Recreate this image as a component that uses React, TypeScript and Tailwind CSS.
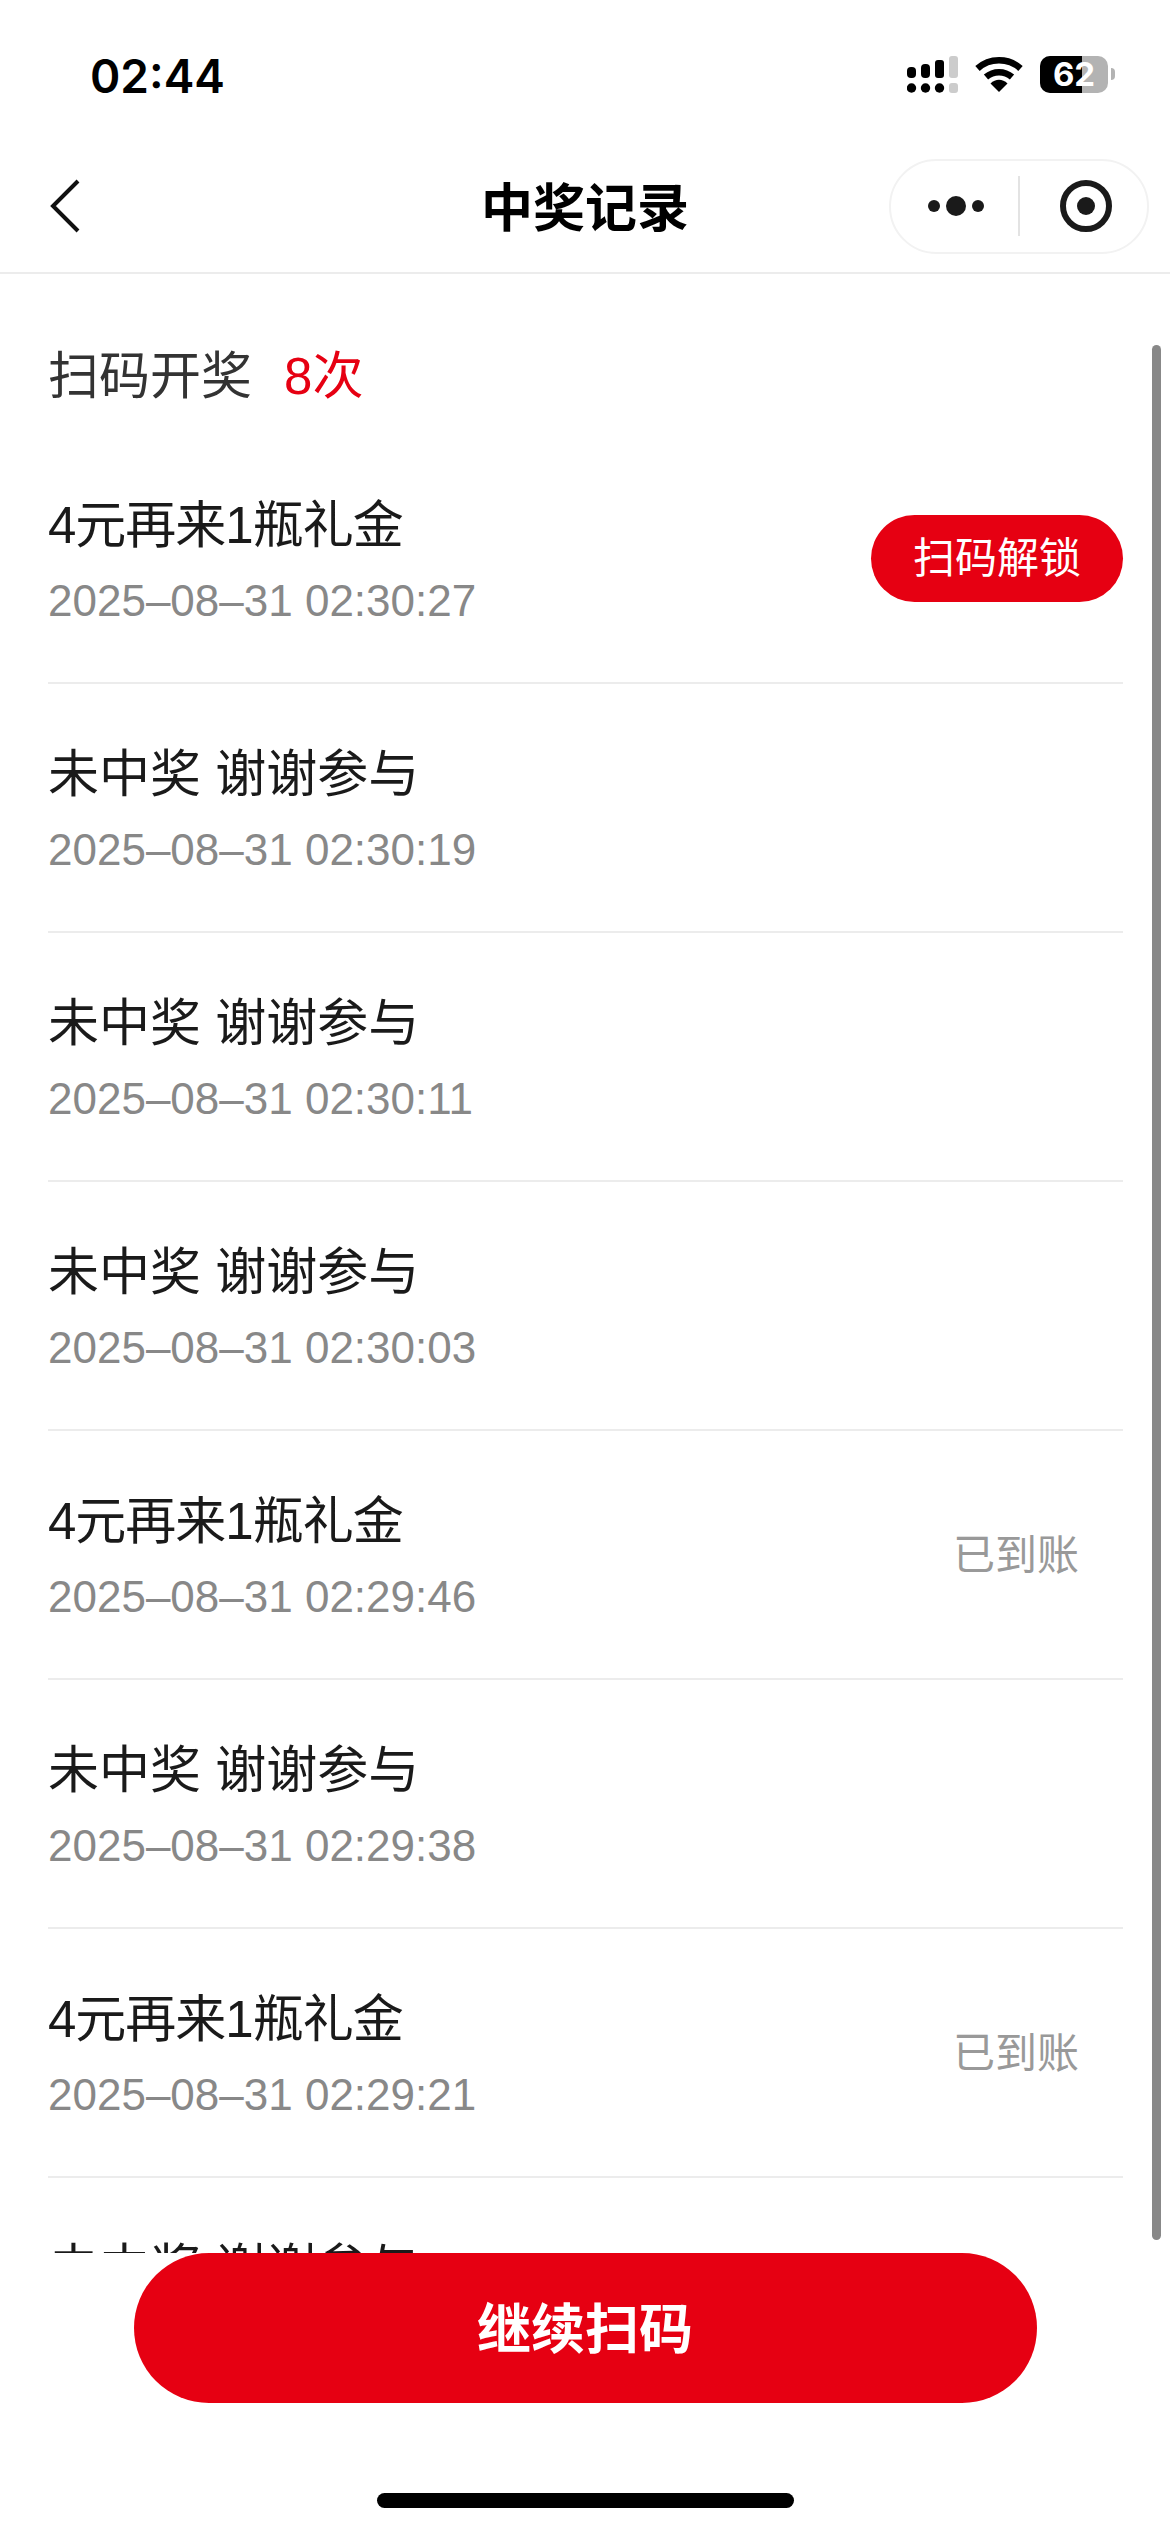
import React from 'react';

const records = [
  { title: '4元再来1瓶礼金', time: '2025–08–31 02:30:27', action: 'unlock', tight: true },
  { title: '未中奖 谢谢参与', time: '2025–08–31 02:30:19' },
  { title: '未中奖 谢谢参与', time: '2025–08–31 02:30:11' },
  { title: '未中奖 谢谢参与', time: '2025–08–31 02:30:03' },
  { title: '4元再来1瓶礼金', time: '2025–08–31 02:29:46', action: 'done', tight: true },
  { title: '未中奖 谢谢参与', time: '2025–08–31 02:29:38' },
  { title: '4元再来1瓶礼金', time: '2025–08–31 02:29:21', action: 'done', tight: true },
  { title: '未中奖 谢谢参与', time: '2025–08–31 02:29:13' },
];

const SignalIcon = () => (
  <svg width="51" height="37" viewBox="0 0 51 37">
    <g fill="#000">
      <rect x="0" y="11" width="9" height="11" rx="4" />
      <rect x="14" y="8" width="9" height="14" rx="4" />
      <rect x="28" y="4" width="9" height="18" rx="3" />
      <circle cx="4.5" cy="32" r="4.7" />
      <circle cx="18.5" cy="32" r="4.7" />
      <circle cx="32.5" cy="32" r="4.7" />
    </g>
    <g fill="#ccc">
      <rect x="42" y="0" width="9" height="22" rx="3" />
      <rect x="42" y="27" width="9" height="10" rx="3" />
    </g>
  </svg>
);

const WifiIcon = () => (
  <svg width="48" height="36" viewBox="0 0 48 36">
    <path d="M2.5 12.5C14.5 1.5 33.5 1.5 45.5 12.5" fill="none" stroke="#000" strokeWidth="6.5" />
    <path d="M11 21C18.5 14.5 29.5 14.5 37 21" fill="none" stroke="#000" strokeWidth="6.5" />
    <path d="M15.5 27.5C20.5 22.5 27.5 22.5 32.5 27.5L24 36Z" fill="#000" />
  </svg>
);

const BatteryIcon = () => (
  <div className="flex items-center">
    <div className="relative flex h-[37px] w-[68px] rounded-[10px] bg-[#b3b3b3]">
      <div className="h-full w-[42px] rounded-l-[10px] bg-black" />
      <span className="absolute inset-0 flex items-center justify-center font-['Inter',sans-serif] text-[33px] font-bold leading-none text-white">
        62
      </span>
    </div>
    <div className="ml-[3px] h-[12px] w-[4px] rounded-r-full bg-[#b3b3b3]" />
  </div>
);

const MoreIcon = () => (
  <svg width="58" height="22" viewBox="0 0 58 22">
    <g fill="#1a1a1a">
      <circle cx="6" cy="11" r="6" />
      <circle cx="28" cy="11" r="10" />
      <circle cx="50" cy="11" r="6" />
    </g>
  </svg>
);

const CloseIcon = () => (
  <svg width="52" height="52" viewBox="0 0 52 52">
    <circle cx="26" cy="26" r="23" fill="none" stroke="#1a1a1a" strokeWidth="6" />
    <circle cx="26" cy="26" r="9" fill="#1a1a1a" />
  </svg>
);

const BackIcon = () => (
  <svg width="30" height="54" viewBox="0 0 30 54">
    <path d="M28 2L3 27L28 52" fill="none" stroke="#111" strokeWidth="4" />
  </svg>
);

const App: React.FC = () => {
  return (
    <div className="relative flex h-[2532px] w-[1170px] flex-col overflow-hidden bg-white font-['Liberation_Sans','Noto_Sans_CJK_SC',sans-serif]">
      {/* Status bar */}
      <div className="flex h-[130px] shrink-0 items-center justify-between pl-[90px] pr-[55px] pt-[18px]">
        <span className="pt-[3px] font-['Inter',sans-serif] text-[46px] font-semibold leading-none text-black">02:44</span>
        <div className="flex items-center gap-[17px]">
          <SignalIcon />
          <WifiIcon />
          <BatteryIcon />
        </div>
      </div>

      {/* Nav */}
      <div className="grid h-[144px] shrink-0 grid-cols-[1fr_auto_1fr] items-center border-b-2 border-[#ececec] pt-[10px]">
        <div className="pl-[50px]">
          <div className="flex w-[30px]">
            <BackIcon />
          </div>
        </div>
        <div className="pt-[5px] text-[52px] font-bold leading-none text-black">中奖记录</div>
        <div className="flex justify-end pr-[21px]">
          <div className="flex h-[95px] w-[260px] items-center rounded-full border-2 border-[#f2f2f2]">
            <div className="flex flex-1 justify-center pl-[4px]">
              <MoreIcon />
            </div>
            <div className="h-[60px] w-[2px] bg-[#e3e3e3]" />
            <div className="flex flex-1 justify-center pl-[4px]">
              <CloseIcon />
            </div>
          </div>
        </div>
      </div>

      {/* List */}
      <div className="min-h-0 flex-1 overflow-hidden pl-[48px] pr-[47px]">
        <div className="flex h-[161px] items-center pt-[43px] text-[51px] leading-none text-[#333]">
          <span>扫码开奖</span>
          <span className="ml-[32px] text-[#e60012]">8次</span>
        </div>
        {records.map((r, i) => (
          <div key={i} className="flex h-[249px] items-center justify-between border-b-2 border-[#ececec]">
            <div className="pt-[6px]">
              <div className={r.tight ? 'text-[51px] leading-[70px] tracking-[-1px] text-[#1a1a1a]' : 'text-[51px] leading-[70px] text-[#1a1a1a]'}>
                {r.title}
              </div>
              <div className="mt-[8px] text-[44px] leading-[64px] text-[#888]">{r.time}</div>
            </div>
            {r.action === 'unlock' && (
              <div className="flex h-[87px] w-[252px] items-center justify-center rounded-full bg-[#e60012] text-[42px] leading-none text-white">
                扫码解锁
              </div>
            )}
            {r.action === 'done' && <div className="mr-[44px] pt-[3px] text-[42px] leading-none text-[#999]">已到账</div>}
          </div>
        ))}
      </div>

      {/* Footer */}
      <div className="flex h-[279px] shrink-0 flex-col items-center bg-white">
        <div className="flex h-[150px] w-[903px] items-center justify-center rounded-full bg-[#e60012] pt-[3px] text-[54px] font-bold leading-none text-white">
          继续扫码
        </div>
        <div className="mt-[90px] h-[15px] w-[417px] rounded-full bg-black" />
      </div>

      {/* Scrollbar */}
      <div className="absolute left-[1152px] top-[345px] h-[1895px] w-[9px] rounded-full bg-[#888]" />
    </div>
  );
};

export default App;
